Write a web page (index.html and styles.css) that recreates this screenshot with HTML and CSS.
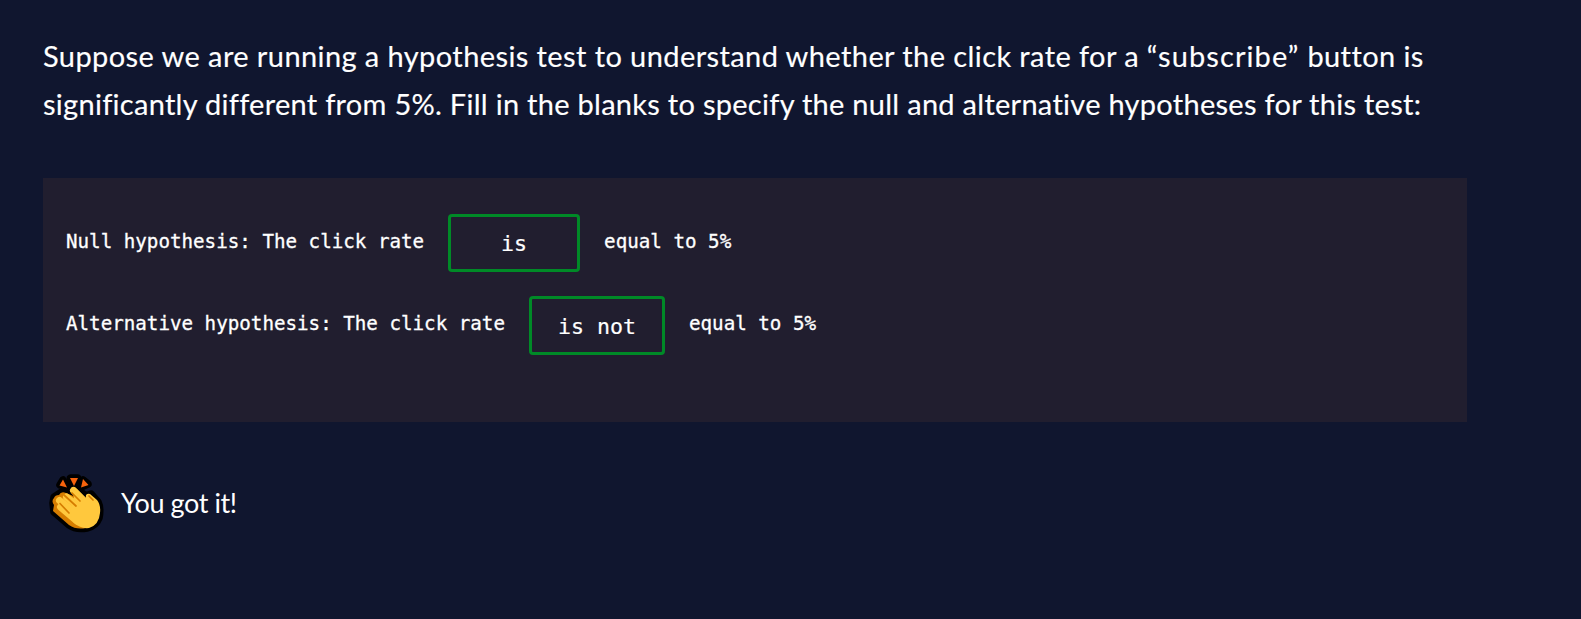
FILE: index.html
```html
<!DOCTYPE html>
<html lang="en">
<head>
<meta charset="utf-8">
<title>Hypothesis test</title>
<link rel="stylesheet" href="styles.css">
</head>
<body>
<main class="exercise">
  <p class="prompt"><span class="line line-a">Suppose we are running a hypothesis test to understand whether the click rate for a <span class="quoted">“subscribe”</span> button is</span> <span class="line line-b">significantly different from 5%. Fill in the blanks to specify the null and alternative hypotheses for this test:</span></p>
  <section class="panel">
    <div class="row"><span class="code">Null hypothesis: The click rate</span><span class="blank blank-short">is</span><span class="code">equal to 5%</span></div>
    <div class="row"><span class="code">Alternative hypothesis: The click rate</span><span class="blank blank-long">is not</span><span class="code">equal to 5%</span></div>
  </section>
  <div class="feedback">
    <svg class="clap" viewBox="0 0 70 75" aria-hidden="true">
      <g class="outline">
        <path d="M20 20l7 2-4-7zM30.500 13h7l-3.500 7zM43 15l-2 7 7-3z"/>
        <path d="M14 32L23 26 34 22 46 31 51 29 58 37Q61 43 59 53Q56 61 47 63Q36 65 29 60L14 47 13 38z"/>
      </g>
      <path class="spark" d="M19.500 20.500l3.500-6 4 8zM30 13h8l-4 8zM41 22.500l2-8.500 5.500 6z"/>
      <path class="back" d="M13 46L14 40Q11 36 14 33Q15 30 19 30Q21 26 26 28L41 34 48 54 46 63Q36 65 29 60z"/>
      <g class="fingers">
        <path d="M33.500 25.500L48 40M26.500 32L43 45M19.500 35.500L38 50M20.500 42L37 56"/>
      </g>
      <path class="hand" d="M31 23Q34 20.500 37 24L46 33Q45 28 50 29L57 35Q61 40 60 48Q59 60 49 63Q40 64 33 57L30 47 34 32z"/>
      <path class="crease" d="M32 28l8 8M24 30l12 11M20 38.500l9 9.500M49 31l4 4"/>
    </svg>
    <span class="message">You got it!</span>
  </div>
</main>
</body>
</html>
```
FILE: styles.css
```css
body {
  margin: 0;
  background: #10162f;
  color: #fff;
  font-family: Lato, "Liberation Sans", sans-serif;
}
.exercise {
  padding: 32px 114px 0 43px;
}
.prompt {
  margin: 0;
  font-size: 29px;
  line-height: 48px;
  -webkit-text-stroke: 0.15px #fff;
}
.line {
  display: block;
  white-space: nowrap;
}
.line-a { letter-spacing: 0.41px; }
.line-b { letter-spacing: 0.28px; }
.quoted { letter-spacing: 1.1px; }
.panel {
  box-sizing: border-box;
  height: 244px;
  margin-top: 50px;
  padding: 36px 23px;
  background: #211e2f;
  display: flex;
  flex-direction: column;
  gap: 24px;
}
.row {
  display: flex;
  align-items: flex-start;
  gap: 24px;
  font-family: "DejaVu Sans Mono", monospace;
  white-space: pre;
}
.code {
  font-size: 19.2px;
  line-height: 56px;
  -webkit-text-stroke: 0.3px #fff;
}
.blank {
  box-sizing: border-box;
  height: 58px;
  border: 3px solid #008a27;
  border-radius: 4px;
  font-size: 21.6px;
  line-height: 54px;
  text-align: center;
  -webkit-text-stroke: 0.2px #fff;
}
.blank-short { width: 132px; }
.blank-long {
  width: 136px;
  height: 59px;
  line-height: 56px;
}
.feedback {
  display: flex;
  align-items: center;
  margin: 43px 0 0 -3px;
}
.clap {
  width: 70px;
  height: 75px;
}
.outline {
  fill: #000;
  stroke: #000;
  stroke-width: 7.5;
  stroke-linejoin: round;
}
.spark { fill: #f7630c; }
.back { fill: #d67d00; }
.hand { fill: #ffc83d; }
.fingers {
  fill: none;
  stroke: #ffc83d;
  stroke-width: 7;
  stroke-linecap: round;
}
.crease {
  fill: none;
  stroke: #d67d00;
  stroke-width: 1.7;
  stroke-linecap: round;
}
.message {
  margin-left: 11px;
  font-size: 27px;
  line-height: 36px;
  letter-spacing: -0.4px;
}
```
